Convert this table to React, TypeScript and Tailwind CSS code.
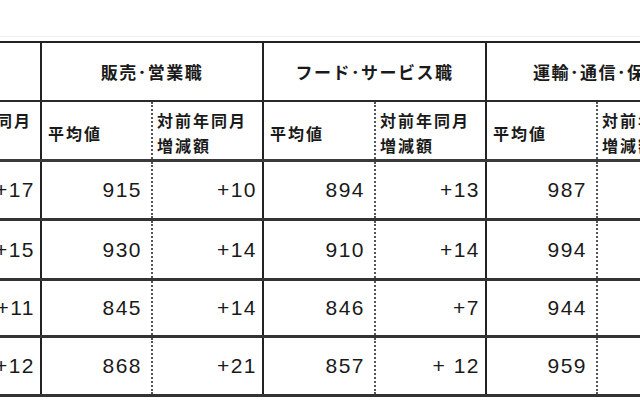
import React from 'react'

const groups = [
  { name: '事務職', w: 'w-[222px]', a: 'w-[112px]', b: 'w-[110px]', pad: 'pl-[11px]' },
  { name: '販売･営業職', w: 'w-[222px]', a: 'w-[112px]', b: 'w-[110px]', pad: 'pl-[4px]' },
  { name: 'フード･サービス職', w: 'w-[223px]', a: 'w-[113px]', b: 'w-[110px]', pad: 'pl-[4px]' },
  { name: '運輸･通信･保安職', w: 'w-[222px]', a: 'w-[112px]', b: 'w-[110px]', pad: 'pl-[4px]' },
]

const rows = [
  { h: 'h-[59px]', cells: [['902', '+17'], ['915', '+10'], ['894', '+13'], ['987', '+9']] },
  { h: 'h-[60px]', cells: [['921', '+15'], ['930', '+14'], ['910', '+14'], ['994', '+12']] },
  { h: 'h-[57px]', cells: [['873', '+11'], ['845', '+14'], ['846', '+7'], ['944', '+8']] },
  { h: 'h-[59px]', cells: [['889', '+12'], ['868', '+21'], ['857', '+ 12'], ['959', '+10']] },
]

const jp = "font-['Noto_Sans_CJK_JP',sans-serif]"
const num = "font-['Liberation_Sans',sans-serif] text-[21px] tracking-[1.5px] text-[#1a1a1a]"

export default function App() {
  return (
    <div className="w-[640px] h-[400px] overflow-hidden bg-white">
      <div className="h-[37px] border-b border-[#f0f0f0]" />
      <div className="ml-[-180px] mt-[4px] w-max border-t-2 border-[#222]">
        {/* group header */}
        <div className="flex h-[59px] border-b-2 border-[#2a2a2a]">
          {groups.map((g, i) => (
            <div
              key={g.name}
              className={`${g.w} flex items-center border-r-2 border-[#222] ${i === 3 ? 'justify-start pl-[46px]' : 'justify-center'}`}
            >
              <span className={`${jp} text-[17px] tracking-[1.5px] font-semibold text-[#1a1a1a] whitespace-nowrap`}>{g.name}</span>
            </div>
          ))}
        </div>
        {/* sub header */}
        <div className="flex h-[60px] border-b-[3px] border-[#3a3a3a]">
          {groups.map((g) => (
            <div key={g.name} className={`${g.w} flex border-r-2 border-[#222]`}>
              <div className={`${g.a} flex items-center pl-[6px] pt-[4px] border-r-2 border-dotted border-[#555]`}>
                <span className={`${jp} text-[16px] tracking-[2px] font-semibold text-[#1a1a1a]`}>平均値</span>
              </div>
              <div className={`${g.b} flex flex-col justify-center ${g.pad} pt-[4px]`}>
                <span className={`${jp} text-[16px] tracking-[2px] font-semibold leading-[25px] text-[#1a1a1a] whitespace-nowrap`}>対前年同月</span>
                <span className={`${jp} text-[16px] tracking-[2px] font-semibold leading-[25px] text-[#1a1a1a]`}>増減額</span>
              </div>
            </div>
          ))}
        </div>
        {/* data rows */}
        {rows.map((r, ri) => (
          <div key={ri} className={`flex ${r.h} border-b-[3px] border-[#333]`}>
            {groups.map((g, gi) => (
              <div key={g.name} className={`${g.w} flex border-r-2 border-[#222]`}>
                <div className={`${g.a} flex items-center justify-end pr-[9px] border-r-2 border-dotted border-[#555]`}>
                  <span className={num}>{r.cells[gi][0]}</span>
                </div>
                <div className={`${g.b} flex items-center justify-end pr-[5px]`}>
                  <span className={num}>{r.cells[gi][1]}</span>
                </div>
              </div>
            ))}
          </div>
        ))}
      </div>
    </div>
  )
}
